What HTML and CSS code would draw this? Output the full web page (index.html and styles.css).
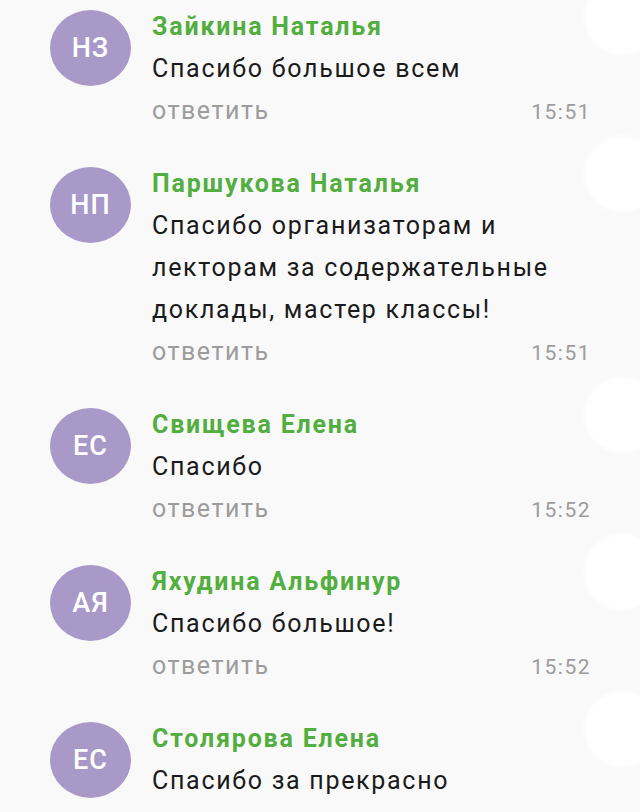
FILE: index.html
```html
<!DOCTYPE html>
<html lang="ru">
<head>
    <meta charset="UTF-8">
    <meta name="viewport" content="width=device-width, initial-scale=1.0">
    <title>Комментарии</title>
    <link rel="stylesheet" href="styles.css">
</head>
<body>
    <div class="comments">
        <div class="comment">
            <div class="avatar">НЗ</div>
            <div class="body">
                <div class="author">Зайкина Наталья</div>
                <div class="text">Спасибо большое всем</div>
                <div class="meta">
                    <span class="reply">ответить</span>
                    <span class="time">15:51</span>
                </div>
            </div>
        </div>

        <div class="comment">
            <div class="avatar">НП</div>
            <div class="body">
                <div class="author">Паршукова Наталья</div>
                <div class="text">Спасибо организаторам и лекторам за содержательные доклады, мастер классы!</div>
                <div class="meta">
                    <span class="reply">ответить</span>
                    <span class="time">15:51</span>
                </div>
            </div>
        </div>

        <div class="comment">
            <div class="avatar">ЕС</div>
            <div class="body">
                <div class="author">Свищева Елена</div>
                <div class="text">Спасибо</div>
                <div class="meta">
                    <span class="reply">ответить</span>
                    <span class="time">15:52</span>
                </div>
            </div>
        </div>

        <div class="comment">
            <div class="avatar">АЯ</div>
            <div class="body">
                <div class="author">Яхудина Альфинур</div>
                <div class="text">Спасибо большое!</div>
                <div class="meta">
                    <span class="reply">ответить</span>
                    <span class="time">15:52</span>
                </div>
            </div>
        </div>

        <div class="comment">
            <div class="avatar">ЕС</div>
            <div class="body">
                <div class="author">Столярова Елена</div>
                <div class="text">Спасибо за прекрасно</div>
            </div>
        </div>
    </div>
</body>
</html>
```

FILE: styles.css
```css
body {
    font-family: Roboto, "Noto Sans", Arial, sans-serif;
    background-color: #f9f9f9;
    margin: 0;
    overflow: hidden;
}
.comments {
    display: flex;
    flex-direction: column;
    gap: 31px;
    padding: 6px 50px 0 50px;
    height: 806px;
    overflow: hidden;
}
.comment {
    position: relative;
    display: flex;
    gap: 21px;
}
/* white blob peeking in at the right edge */
.comment::after {
    content: "";
    position: absolute;
    right: -70px;
    top: -27px;
    width: 76px;
    height: 76px;
    border-radius: 50%;
    background-color: #fff;
    filter: blur(2px);
}
.avatar {
    flex: 0 0 81px;
    width: 81px;
    height: 76px;
    margin-top: 4px;
    border-radius: 50%;
    background-color: #a899c8;
    color: #fff;
    font-size: 27px;
    font-weight: 500;
    letter-spacing: 1px;
    display: flex;
    align-items: center;
    justify-content: center;
}
.body {
    flex: 1;
    line-height: 42px;
}
.author {
    color: #52ae3f;
    font-size: 25px;
    font-weight: bold;
    letter-spacing: 1.8px;
}
.text {
    color: #1a1a1a;
    font-size: 25px;
    letter-spacing: 1.7px;
    padding-right: 20px;
}
.meta {
    display: flex;
    justify-content: space-between;
    align-items: baseline;
    height: 42px;
    color: #9c9c9c;
}
.reply {
    font-size: 25px;
    letter-spacing: 1.5px;
}
.time {
    font-size: 21px;
    letter-spacing: 1.5px;
    margin-right: -1px;
}
```
